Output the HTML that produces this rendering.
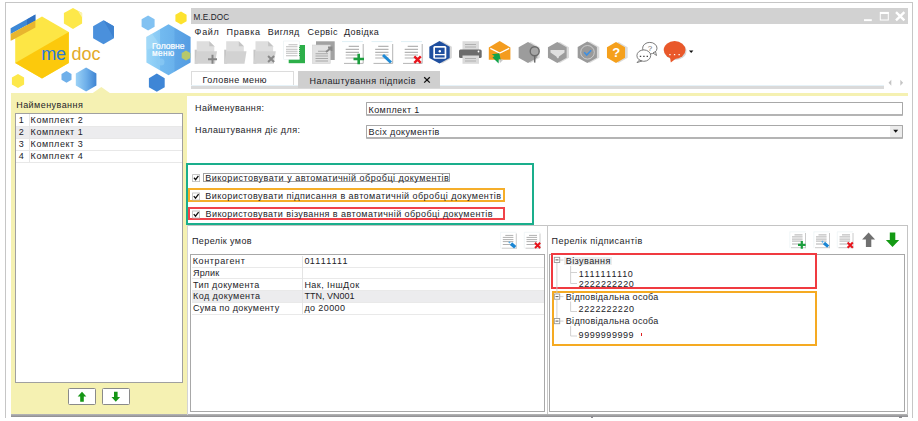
<!DOCTYPE html>
<html><head><meta charset="utf-8">
<style>
*{margin:0;padding:0;box-sizing:border-box}
html,body{width:918px;height:421px;overflow:hidden;background:#fff}
body{position:relative;font-family:"Liberation Sans",sans-serif;font-size:9px;color:#1c1c28;letter-spacing:0.4px}
.a{position:absolute}
.t{position:absolute;white-space:nowrap;line-height:12px;height:12px}
.frame{left:5px;top:2px;width:908px;height:415.6px;border:1px solid #c6c6c6;border-bottom:none}
.titlebar{left:191px;top:8px;width:717px;height:15.5px;background:#d2d2d2}
.yel{background:#f5f1b2}
.box{border:1px solid #a8a8a8;background:#fff}
</style></head><body>
<div class="a frame"></div>

<!-- logo -->
<svg class="a" style="left:0;top:0" width="192" height="96" viewBox="0 0 192 96">
 <defs>
  <linearGradient id="gstr" x1="0" x2="1" y1="0" y2="0">
   <stop offset="0" stop-color="#9cd2f6"/><stop offset="0.5" stop-color="#6fb0ea"/><stop offset="1" stop-color="#3f84d2"/>
  </linearGradient>
  <linearGradient id="gmen" x1="0" x2="1" y1="0" y2="0">
   <stop offset="0" stop-color="#9ad6f8"/><stop offset="0.3" stop-color="#86c8f4"/><stop offset="0.32" stop-color="#72baf0"/><stop offset="0.62" stop-color="#6ab2ec"/><stop offset="0.65" stop-color="#5ea6e6"/><stop offset="1" stop-color="#549ce2"/>
  </linearGradient>
 </defs>
 <polygon points="42.0,16.6 68.8,32.1 68.8,63.1 42.0,78.6 15.2,63.1 15.2,32.1" fill="#fde645"/>
 <polygon points="15.2,63.1 68.8,32.1 68.8,63.1 42.0,78.6" fill="#fcc90c"/>
 <polygon points="10.6,28.3 35.4,14.6 35.4,20.4 10.6,34.1" fill="#3d88d6"/>
 <polygon points="27,19.5 35.4,14.6 35.4,20.4 27,25.3" fill="#2f70c2"/>
 <polygon points="10.6,34.1 35.4,20.4 35.4,27.5 12,40.2 10.6,40.8" fill="#e8b52e"/>
 <text x="41.2" y="60" font-family="Liberation Sans" font-size="18" fill="#2a7ad6" letter-spacing="-0.2">me</text>
 <text x="71.5" y="60" font-family="Liberation Sans" font-size="18" fill="#e3aa2a" letter-spacing="0">doc</text>
 <polygon points="73.0,7.9 82.1,13.1 82.1,23.6 73.0,28.9 63.9,23.6 63.9,13.1" fill="#fde84a"/>
 <polygon points="78,11 82.1,13.1 82.1,17.5" fill="#fbf3b0"/>
 <polygon points="103.5,20.3 113.9,26.3 113.9,38.3 103.5,44.3 93.1,38.3 93.1,26.3" fill="#4a90dc"/>
 <polygon points="103.5,20.3 113.9,26.3 113.9,38.3" fill="#3e82d0"/>
 <polygon points="18.0,74.0 24.1,77.5 24.1,84.5 18.0,88.0 11.9,84.5 11.9,77.5" fill="#fde84a"/>
 <polygon points="66.5,71.1 71.5,74.0 71.5,79.8 66.5,82.7 61.5,79.8 61.5,74.0" fill="#6fb0ea"/>
 <polygon points="86.1,67.6 96.4,73.5 96.4,85.5 86.1,91.4 75.8,85.5 75.8,73.5" fill="url(#gstr)"/>
 <polygon points="92.8,93 101.3,86.9 109.9,93" fill="#f5f1b2"/>
 <polygon points="148.1,15.6 154.6,19.35 154.6,26.85 148.1,30.6 141.6,26.85 141.6,19.35" fill="#82c2f2"/>
 <polygon points="181.0,11.5 186.6,14.75 186.6,21.25 181.0,24.5 175.4,21.25 175.4,14.75" fill="#fde22e"/>
 <polygon points="168.5,24.3 190.6,37.05 190.6,62.55 168.5,75.3 146.4,62.55 146.4,37.05" fill="url(#gmen)"/>
 <polygon points="146.4,37.05 152,33.8 160,45 146.4,50" fill="#a8dcf8" opacity="0.6"/>
 <circle cx="161" cy="62" r="3.5" fill="#8ccaf4" opacity="0.7"/>
 <polygon points="186.0,50.5 190.3,53 190.3,58 186.0,60.5 181.7,58 181.7,53" fill="#b6c86a"/>
 <polygon points="156.8,73.6 164.7,78.15 164.7,87.25 156.8,91.8 148.9,87.25 148.9,78.15" fill="#3f86d6"/>
 <text x="152" y="49.4" font-family="Liberation Sans" font-size="8.6" fill="#fff" stroke="#fff" stroke-width="0.2" letter-spacing="0">Головне</text>
 <text x="152" y="56.4" font-family="Liberation Sans" font-size="8.2" fill="#fff" stroke="#fff" stroke-width="0.2">меню</text>
</svg>


<!-- title bar -->
<div class="a titlebar"></div>
<div class="t" style="left:193.5px;top:11.7px;font-size:8.2px;letter-spacing:0.1px">M.E.DOC</div>


<!-- toolbar icons -->
<svg class="a" style="left:0;top:0" width="918" height="70" viewBox="0 0 918 70">
 <!-- 1 folder + -->
 <g transform="translate(193.5,40)">
  <rect x="1.2" y="9.7" width="3" height="14" fill="#c6c6c6"/>
  <polygon points="3.2,1.3 15.8,1.3 20.8,6.3 20.8,16 3.2,16" fill="#dedede"/>
  <polygon points="15.8,1.3 15.8,6.3 20.8,6.3" fill="#c4c4c4"/>
  <polygon points="3.5,11.3 23.5,11.3 21.5,23.7 1.2,23.7" fill="#d2d2d2"/>
  <path d="M14.5 19.2h9M19 14.7v9" stroke="#858585" stroke-width="2"/>
 </g>
 <!-- 2 folder -->
 <g transform="translate(223,40)">
  <rect x="1.2" y="9.7" width="3" height="14" fill="#c6c6c6"/>
  <polygon points="3.2,1.3 15.8,1.3 20.8,6.3 20.8,16 3.2,16" fill="#dedede"/>
  <polygon points="15.8,1.3 15.8,6.3 20.8,6.3" fill="#c4c4c4"/>
  <polygon points="3.5,11.3 23.5,11.3 21.5,23.7 1.2,23.7" fill="#d2d2d2"/>
 </g>
 <!-- 3 folder x -->
 <g transform="translate(252.3,40)">
  <rect x="1.2" y="9.7" width="3" height="14" fill="#c6c6c6"/>
  <polygon points="3.2,1.3 15.8,1.3 20.8,6.3 20.8,16 3.2,16" fill="#dedede"/>
  <polygon points="15.8,1.3 15.8,6.3 20.8,6.3" fill="#c4c4c4"/>
  <polygon points="3.5,11.3 23.5,11.3 21.5,23.7 1.2,23.7" fill="#d2d2d2"/>
  <path d="M15.8 16l6 6M21.8 16l-6 6" stroke="#888" stroke-width="2"/>
 </g>
 <!-- 4 copy green -->
 <g transform="translate(281,40)">
  <rect x="7.7" y="5" width="16.3" height="18.2" fill="#2daf49"/>
  <rect x="2.7" y="1" width="15.6" height="18.3" fill="#fff" stroke="#e6eef0" stroke-width="0.6"/>
  <path d="M7.5 4.7h9M5 6.7h11.5M5 9.3h11.5M5 11.3h11.5M5 13.3h11.5M5 15.7h11.5" stroke="#bdbdbd" stroke-width="1.1"/>
  <path d="M18.5 7v10" stroke="#1e8a36" stroke-width="0.8" stroke-dasharray="1 1"/>
 </g>
 <!-- 5 gray copy -->
 <g transform="translate(310,40)">
  <rect x="6" y="1.3" width="18.7" height="18.7" fill="#a2a2a2"/>
  <rect x="2.3" y="5" width="18" height="18.7" fill="#e2e2e2" stroke="#d0d0d0" stroke-width="0.5"/>
  <path d="M8 11.3h10M5.5 13.7h12.5M5.5 16h12.5M5.5 18.5h12.5M5.5 21h12.5" stroke="#a8a8a8" stroke-width="1.1"/>
  <path d="M16 12l5-4M18 7.5h3.5v3.5" stroke="#8a8a8a" stroke-width="2" fill="none"/>
 </g>
 <!-- 6 doc + -->
 <g transform="translate(340,40)">
  <rect x="2" y="1.3" width="21.7" height="22.4" fill="#fff"/>
  <path d="M2 1.6h21" stroke="#dff0f6" stroke-width="1"/>
  <path d="M23.2 4v19.4H4" stroke="#b4b4b4" stroke-width="1" fill="none"/>
  <path d="M8.7 6.3h10.3M5.7 9.3h13.3M5.7 12.3h13.3M5.7 15h13.3M5.7 18h13.3" stroke="#b4b4b4" stroke-width="1.2"/>
  <path d="M13.5 19h10.5M18.7 13.8v10.4" stroke="#1c9e3e" stroke-width="2.6"/>
 </g>
 <!-- 7 doc edit -->
 <g transform="translate(369.5,40)">
  <rect x="2" y="1.3" width="21.7" height="22.4" fill="#fff"/>
  <path d="M2 1.6h21" stroke="#dff0f6" stroke-width="1"/>
  <path d="M23.2 4v19.4H4" stroke="#b4b4b4" stroke-width="1" fill="none"/>
  <path d="M8.7 6.3h10.3M5.7 9.3h13.3M5.7 12.3h13.3M5.7 15h13.3M5.7 18h13.3" stroke="#b4b4b4" stroke-width="1.2"/>
  <path d="M13.5 15l8 7.5" stroke="#1f8ad6" stroke-width="3"/>
 </g>
 <!-- 8 doc delete -->
 <g transform="translate(399,40)">
  <rect x="2" y="1.3" width="21.7" height="22.4" fill="#fff"/>
  <path d="M2 1.6h21" stroke="#dff0f6" stroke-width="1"/>
  <path d="M23.2 4v19.4H4" stroke="#b4b4b4" stroke-width="1" fill="none"/>
  <path d="M8.7 6.3h10.3M5.7 9.3h13.3M5.7 12.3h13.3M5.7 15h13.3M5.7 18h13.3" stroke="#b4b4b4" stroke-width="1.2"/>
  <path d="M15.3 16.3l6.5 6.5M21.8 16.3l-6.5 6.5" stroke="#e8141c" stroke-width="2.4"/>
 </g>
 <!-- 9 blue hex -->
 <polygon points="442.10,41.00 451.89,46.65 451.89,57.95 442.10,63.60 432.31,57.95 432.31,46.65" fill="#d8d8d8"/>
 <polygon points="439.50,41.00 449.67,46.65 449.67,57.95 439.50,63.60 429.33,57.95 429.33,46.65" fill="#1f4f9f"/>
 <rect x="433.3" y="46" width="13" height="12.7" rx="1.5" fill="#fff"/>
 <rect x="435" y="47.7" width="9.6" height="6.3" fill="#1f4f9f"/>
 <rect x="435" y="55.3" width="9.6" height="2.2" fill="#1f4f9f"/>
 <circle cx="439.8" cy="51.2" r="1.2" fill="#fff"/>
 <!-- 10 printer -->
 <g transform="translate(459,40)">
  <rect x="3.5" y="1.2" width="16.5" height="9" fill="#dcdcdc"/>
  <path d="M6 4.5h11M6 7h11" stroke="#b0b0b0" stroke-width="1"/>
  <rect x="0" y="9.5" width="22.7" height="8.5" rx="1.5" fill="#6c6c6c"/>
  <circle cx="19.5" cy="11.5" r="0.9" fill="#fff"/>
  <rect x="3.5" y="15.5" width="16.5" height="8.3" fill="#dadada"/>
  <path d="M6 18.5h11M6 21h11" stroke="#b0b0b0" stroke-width="1"/>
 </g>
 <!-- 11 orange envelope -->
 <polygon points="488.8,47.5 499.7,41 510.4,47.5 510.4,59.8 488.8,59.8" fill="#f49c1e"/>
 <polyline points="490.3,48.3 499.7,53 509.2,48.3" fill="none" stroke="#fff" stroke-width="1.3"/>
 <polygon points="498.6,63.5 492.5,57.5 494.5,56 491.8,54.2 499.3,53.2 500.8,60.5 498.8,58.7" fill="#13a34a"/>
 <polygon points="500,63 503.5,59.5 499,59.5" fill="#c8c8c8"/>
 <!-- 12 gray hex search -->
 <polygon points="530.60,42.00 539.69,47.25 539.69,57.75 530.60,63.00 521.51,57.75 521.51,47.25" fill="#dedede"/>
 <polygon points="528.00,42.00 537.35,47.25 537.35,57.75 528.00,63.00 518.65,57.75 518.65,47.25" fill="#9c9c9c"/>
 <circle cx="534.7" cy="51.3" r="4.5" fill="#a6a6a6" stroke="#6a6a6a" stroke-width="1.4"/>
 <path d="M534.7 55.8v6.8" stroke="#6a6a6a" stroke-width="1.5"/>
 <!-- 13 filter -->
 <polygon points="559.90,42.00 568.99,47.25 568.99,57.75 559.90,63.00 550.81,57.75 550.81,47.25" fill="#dcdcdc"/>
 <polygon points="557.30,42.00 566.64,47.25 566.64,57.75 557.30,63.00 547.95,57.75 547.95,47.25" fill="#9c9c9c"/>
 <polygon points="550.5,50 564.5,50 564.5,52.5 559,56.5 558.5,58.3 557.3,58.3 556.3,56.5 550.5,52.5" fill="#e0e0e0"/>
 <!-- 14 check -->
 <polygon points="589.90,41.50 599.25,46.90 599.25,57.70 589.90,63.10 580.55,57.70 580.55,46.90" fill="#dcdcdc"/>
 <polygon points="587.30,41.50 596.91,46.90 596.91,57.70 587.30,63.10 577.69,57.70 577.69,46.90" fill="#9a9a9a"/>
 <circle cx="587.5" cy="52.3" r="6.8" fill="none" stroke="#d8d8d8" stroke-width="0.8"/>
 <polyline points="584.2,52.3 586.7,55 591.2,50.3" fill="none" stroke="#3d8fe2" stroke-width="1.6"/>
 <!-- 15 orange ? -->
 <polygon points="618.60,42.00 627.69,47.25 627.69,57.75 618.60,63.00 609.51,57.75 609.51,47.25" fill="#dcdcdc"/>
 <polygon points="616.00,42.00 625.03,47.25 625.03,57.75 616.00,63.00 606.97,57.75 606.97,47.25" fill="#f5a01c"/>
 <text x="612.3" y="57.3" font-family="Liberation Sans" font-weight="bold" font-size="13" fill="#fff">?</text>
 <!-- 16 chat bubbles -->
 <g fill="#fff" stroke="#6e6e6e" stroke-width="0.9">
  <ellipse cx="649.8" cy="48.2" rx="7.2" ry="5.8"/>
  <polygon points="653,53 656.5,55.5 655.5,51.5"/>
 </g>
 <text x="647.8" y="50.6" font-family="Liberation Sans" font-size="8" fill="#707070">?</text>
 <g fill="#fff" stroke="#6e6e6e" stroke-width="0.9">
  <ellipse cx="643.8" cy="55.6" rx="6.9" ry="5.7"/>
  <polygon points="639.5,60 637,62.6 641.8,61"/>
 </g>
 <path d="M639.8 56.4h1.4M643.2 56.4h1.4M646.6 56.4h1.4" stroke="#444" stroke-width="1.4"/>
 <!-- 17 orange bubble -->
 <ellipse cx="675.5" cy="51" rx="11" ry="9" fill="#d6d6d6"/>
 <ellipse cx="674.6" cy="50" rx="10.9" ry="9" fill="#e9582a"/>
 <polygon points="670,57 676,58.5 670.8,62.5" fill="#e9582a"/>
 <path d="M669.3 54.6h1.3M673.9 54.6h1.3M678.5 54.6h1.3" stroke="#fff" stroke-width="1.3"/>
 <polygon points="689,50.5 693.4,50.5 691.2,53" fill="#111"/>
</svg>


<svg class="a" style="left:860px;top:8px" width="50" height="16" viewBox="860 8 50 16">
 <rect x="864" y="19.2" width="7.8" height="1.9" fill="#fff"/>
 <rect x="880.3" y="12.4" width="8" height="7.6" fill="none" stroke="#fff" stroke-width="1"/>
 <rect x="880" y="12" width="8.6" height="2" fill="#fff"/>
 <path d="M896 12.2l8.4 8.2M904.4 12.2l-8.4 8.2" stroke="#fff" stroke-width="2.4"/>
</svg>
<svg class="a" style="left:884px;top:74px" width="24" height="16" viewBox="884 74 24 16">
 <polygon points="891.3,79.8 891.3,85.8 888.5,82.8" fill="#c4c4c4"/>
 <polygon points="900.3,79.8 900.3,85.8 903.1,82.8" fill="#c4c4c4"/>
</svg>

<!-- menu -->
<div class="t" style="left:194.6px;top:25.5px;letter-spacing:0.7px">Файл</div>
<div class="t" style="left:226.6px;top:25.5px;letter-spacing:0.6px">Правка</div>
<div class="t" style="left:267.8px;top:25.5px">Вигляд</div>
<div class="t" style="left:307.6px;top:25.5px">Сервіс</div>
<div class="t" style="left:344px;top:25.5px">Довідка</div>

<!-- tabs -->
<div class="a" style="left:191.3px;top:71px;width:102.5px;height:15px;background:#fff;border:1px solid #dcdcdc;border-bottom:none"></div>
<div class="a" style="left:191px;top:85.3px;width:693px;height:3.5px;background:#dadada;border-top:1px solid #e6f2f8"></div>
<div class="t" style="left:202.6px;top:74px">Головне меню</div>
<div class="a" style="left:297.8px;top:70.8px;width:142.4px;height:17.3px;background:#cfcfcf"></div>
<div class="t" style="left:309.5px;top:74.5px">Налаштування підписів</div>
<svg class="a" style="left:420px;top:73px" width="14" height="14" viewBox="420 73 14 14"><path d="M424.2 77.2l5.6 5.4M429.8 77.2l-5.6 5.4" stroke="#111" stroke-width="1.3"/></svg>

<!-- yellow panel -->
<div class="a yel" style="left:11px;top:93px;width:897px;height:321.5px"></div>
<div class="a" style="left:187px;top:96px;width:720.5px;height:318.5px;background:#fff"></div>
<div class="a" style="left:11px;top:413.6px;width:897px;height:3px;background:linear-gradient(#b8b8b8,#8c8c90)"></div>
<div class="a" style="left:590.5px;top:416px;width:2.5px;height:1.8px;background:#8c8c90"></div>
<div class="a" style="left:899px;top:416px;width:2.5px;height:1.8px;background:#8c8c90"></div>

<!-- left panel -->
<div class="t" style="left:16.2px;top:99px;letter-spacing:0.45px">Найменування</div>
<div class="a box" style="left:15px;top:113px;width:168px;height:270px;border-color:#a0a0a0"></div>

<!-- form -->
<div class="t" style="left:195px;top:101.5px">Найменування:</div>
<div class="t" style="left:195px;top:123.5px">Налаштування діє для:</div>
<div class="a box" style="left:366px;top:102px;width:536.5px;height:14px;border-radius:1px;border-bottom:2px solid #b4b4b4"></div>
<div class="t" style="left:368.5px;top:103.5px">Комплект 1</div>
<div class="a box" style="left:366px;top:124.5px;width:536.5px;height:14px;border-radius:1px;border-bottom:2px solid #b4b4b4"></div>
<div class="a" style="left:890px;top:125.5px;width:11.5px;height:11px;background:#ececec"></div>
<svg class="a" style="left:890px;top:125px" width="12" height="12" viewBox="890 125 12 12"><polygon points="893.2,129.8 898.2,129.8 895.7,132.8" fill="#111"/></svg>
<div class="t" style="left:368.5px;top:125.8px">Всіх документів</div>

<!-- checkbox group -->
<div class="a" style="left:186px;top:162.5px;width:348.3px;height:62.3px;border:2px solid #1aae8c"></div>

<!-- panels -->
<div class="a" style="left:187px;top:225px;width:720px;height:1px;background:#c4c4c4"></div>
<div class="a" style="left:547px;top:225px;width:1px;height:189px;background:#c8c8c8"></div>
<div class="a" style="left:907px;top:225px;width:1px;height:189.5px;background:#c4c4c4"></div>
<div class="a" style="left:187px;top:225px;width:1px;height:189.5px;background:#d4d4d4"></div>
<div class="t" style="left:192px;top:235px">Перелік умов</div>
<div class="a box" style="left:190.2px;top:254px;width:355px;height:158.2px"></div>
<div class="t" style="left:551.5px;top:235px;letter-spacing:0.47px">Перелік підписантів</div>
<div class="a box" style="left:549.4px;top:254.2px;width:355.3px;height:158px"></div>


<!-- left list rows -->
<div class="a" style="left:16px;top:126.2px;width:166px;height:12px;background:#ececee"></div>
<div class="a" style="left:16px;top:126px;width:166px;height:1px;background:#e8e8e8"></div>
<div class="a" style="left:16px;top:138px;width:166px;height:1px;background:#e8e8e8"></div>
<div class="a" style="left:16px;top:150px;width:166px;height:1px;background:#e8e8e8"></div>
<div class="a" style="left:16px;top:161.7px;width:166px;height:1px;background:#e8e8e8"></div>
<div class="a" style="left:29px;top:114px;width:1px;height:48px;background:#e6e6e6"></div>
<div class="t" style="left:18.8px;top:114.2px">1</div>
<div class="t" style="left:30.6px;top:114.2px;letter-spacing:0.55px">Комплект 2</div>
<div class="t" style="left:18.8px;top:126.2px">2</div>
<div class="t" style="left:30.6px;top:126.2px;letter-spacing:0.55px">Комплект 1</div>
<div class="t" style="left:18.8px;top:138.2px">3</div>
<div class="t" style="left:30.6px;top:138.2px;letter-spacing:0.55px">Комплект 3</div>
<div class="t" style="left:18.8px;top:150px">4</div>
<div class="t" style="left:30.6px;top:150px;letter-spacing:0.55px">Комплект 4</div>

<!-- up/down buttons -->
<div class="a" style="left:68.3px;top:388.3px;width:27.6px;height:16.6px;background:#fff;border:1px solid #8a8a8a;border-radius:1.5px"></div>
<div class="a" style="left:101.8px;top:388.3px;width:27.9px;height:16.6px;background:#fff;border:1px solid #8a8a8a;border-radius:1.5px"></div>
<svg class="a" style="left:0;top:380px" width="140" height="30" viewBox="0 380 140 30">
 <polygon points="82,391.8 86.3,396.5 83.8,396.5 83.8,401.8 80.2,401.8 80.2,396.5 77.7,396.5" fill="#159615"/>
 <polygon points="115.8,401.8 120.1,397.1 117.6,397.1 117.6,391.8 114,391.8 114,397.1 111.5,397.1" fill="#159615"/>
</svg>

<!-- checkboxes -->
<div class="a" style="left:188.3px;top:188.3px;width:316.5px;height:13.8px;border:2px solid #f5ae2a"></div>
<div class="a" style="left:188.3px;top:206.6px;width:316.5px;height:13.6px;border:2px solid #f0444a"></div>
<div class="a" style="left:203.2px;top:172.7px;width:247.2px;height:9.8px;border:1px solid #a0a0a0"></div>
<svg class="a" style="left:185px;top:165px" width="20" height="60" viewBox="185 165 20 60">
 <g fill="#fff" stroke="#b8b8b8" stroke-width="0.8">
  <rect x="192.6" y="174.6" width="7" height="7"/>
  <rect x="192.6" y="193" width="7" height="7"/>
  <rect x="192.6" y="211" width="7" height="7"/>
 </g>
 <g fill="none" stroke="#111" stroke-width="1.3">
  <polyline points="194,177.8 195.6,179.6 198.4,175.8"/>
  <polyline points="193.8,196.2 195.5,198.2 198.6,194.2"/>
  <polyline points="193.8,214.2 195.5,216.2 198.6,212.2"/>
 </g>
</svg>
<div class="t" style="left:205.3px;top:171.7px;letter-spacing:0.5px">Використовувати у автоматичній обробці документів</div>
<div class="t" style="left:205.3px;top:190px;letter-spacing:0.46px">Використовувати підписання в автоматичній обробці документів</div>
<div class="t" style="left:205.5px;top:208.3px;letter-spacing:0.43px">Використовувати візування в автоматичній обробці документів</div>

<!-- conditions table -->
<div class="a" style="left:191.5px;top:290.1px;width:352px;height:11.7px;background:#ececee"></div>
<div class="a" style="left:191.5px;top:266.6px;width:352px;height:1px;background:#e9e9e9"></div>
<div class="a" style="left:191.5px;top:278.2px;width:352px;height:1px;background:#e9e9e9"></div>
<div class="a" style="left:191.5px;top:290.1px;width:352px;height:1px;background:#e9e9e9"></div>
<div class="a" style="left:191.5px;top:301.8px;width:352px;height:1px;background:#e9e9e9"></div>
<div class="a" style="left:191.5px;top:313.5px;width:352px;height:1px;background:#e9e9e9"></div>
<div class="a" style="left:302.2px;top:255.5px;width:1px;height:58px;background:#e4e4e4"></div>
<div class="t" style="left:192.7px;top:254.5px;letter-spacing:0.62px">Контрагент</div>
<div class="t" style="left:193px;top:266.5px;letter-spacing:0.18px">Ярлик</div>
<div class="t" style="left:193px;top:278.5px;letter-spacing:0.4px">Тип документа</div>
<div class="t" style="left:193px;top:290.3px;letter-spacing:0.44px">Код документа</div>
<div class="t" style="left:193px;top:302px;letter-spacing:0.35px">Сума по документу</div>
<div class="t" style="left:304.4px;top:254.5px;letter-spacing:0.45px;font-kerning:none">01111111</div>
<div class="t" style="left:304.4px;top:278.5px;letter-spacing:0.45px">Нак, ІншДок</div>
<div class="t" style="left:304.4px;top:290.3px;letter-spacing:0.02px">TTN, VN001</div>
<div class="t" style="left:304.4px;top:302px;letter-spacing:0.4px">до 20000</div>

<!-- small toolbar icons -->
<svg class="a" style="left:495px;top:228px" width="415" height="24" viewBox="495 228 415 24">
 <defs>
  <g id="sdoc">
   <rect x="0" y="0" width="16.5" height="16.5" fill="#fff"/>
   <path d="M0.2 0.3h16M0.3 0.3v16" stroke="#eef4f6" stroke-width="0.8"/>
   <path d="M16 1.5v15.2M1.5 16.2h14.8" stroke="#c4c4c4" stroke-width="0.9"/>
   <path d="M5 3.4h8M2.5 5.4h10.6M2.5 7.6h10.6M2.5 9.6h10.6M2.5 12.5h10.6" stroke="#b0b0b0" stroke-width="1"/>
  </g>
 </defs>
 <use href="#sdoc" x="500.3" y="232"/>
 <path d="M508.8 241.8l1.3 1.1" stroke="#5aaee8" stroke-width="1.6"/>
 <path d="M511 243.6l4.2 3.6" stroke="#1a86d4" stroke-width="3.4"/>
 <use href="#sdoc" x="524" y="232"/>
 <path d="M535 242.8l5.2 5.2M540.2 242.8l-5.2 5.2" stroke="#e8141c" stroke-width="2"/>
 <use href="#sdoc" x="789.5" y="231.5"/>
 <path d="M798 244.9h7.6M801.8 241v7.8" stroke="#1c9e3e" stroke-width="2.2"/>
 <use href="#sdoc" x="813.5" y="231.5"/>
 <path d="M821.8 241.2l1.3 1.1" stroke="#5aaee8" stroke-width="1.6"/>
 <path d="M824 243l4.2 3.6" stroke="#1a86d4" stroke-width="3.2"/>
 <use href="#sdoc" x="837" y="231.5"/>
 <path d="M847.6 242.5l5.2 5.2M852.8 242.5l-5.2 5.2" stroke="#e8141c" stroke-width="2"/>
 <polygon points="868.6,232.6 875.1,239.5 871.3,239.5 871.3,247 865.9,247 865.9,239.5 862.1,239.5" fill="#707070"/>
 <polygon points="892.5,247 899.2,240 895.3,240 895.3,232.6 889.8,232.6 889.8,240 885.9,240" fill="#149a14"/>
</svg>

<!-- tree -->
<div class="a" style="left:551px;top:253px;width:265.5px;height:35.5px;border:2px solid #f03a40"></div>
<div class="a" style="left:551.5px;top:290.5px;width:265px;height:55.7px;border:2px solid #f5aa22"></div>
<div class="a" style="left:563.5px;top:256.8px;width:48.2px;height:8.7px;background:#ececec"></div>
<svg class="a" style="left:550px;top:255px" width="40" height="90" viewBox="550 255 40 90">
 <g stroke="#cdcdcd" stroke-width="0.9" fill="none">
  <path d="M570.6 266v17.5h6.4M570.6 272.5h6.4"/>
  <path d="M570.6 301.5v10h6.4"/>
  <path d="M570.6 326v10h6.4"/>
  <path d="M556.9 262.5v31.5M556.9 300v18.5"/>
  <path d="M560 260h3.5M560 296.6h3.5M560 321.1h3.5"/>
 </g>
 <g fill="#fff" stroke="#9a9a9a" stroke-width="0.9">
  <rect x="554.3" y="257.3" width="5.4" height="5.2"/>
  <rect x="554.3" y="294" width="5.4" height="5.2"/>
  <rect x="554.3" y="318.5" width="5.4" height="5.2"/>
 </g>
 <path d="M555.5 259.9h3M555.5 296.6h3M555.5 321.1h3" stroke="#444" stroke-width="0.9"/>
</svg>
<div class="t" style="left:565.7px;top:254.8px;letter-spacing:0.45px">Візування</div>
<div class="t" style="left:578.7px;top:267.8px;letter-spacing:0.45px;font-kerning:none">1111111110</div>
<div class="t" style="left:578.7px;top:277.8px;letter-spacing:0.55px">2222222220</div>
<div class="t" style="left:565.8px;top:290.7px;letter-spacing:0.3px">Відповідальна особа</div>
<div class="t" style="left:578.6px;top:303px;letter-spacing:0.6px">2222222220</div>
<div class="t" style="left:565.8px;top:315.4px;letter-spacing:0.3px">Відповідальна особа</div>
<div class="t" style="left:578.6px;top:328.7px;letter-spacing:0.55px">9999999999</div>
<div class="a" style="left:641px;top:332.5px;width:1px;height:3px;background:#e02020"></div>

</body></html>
